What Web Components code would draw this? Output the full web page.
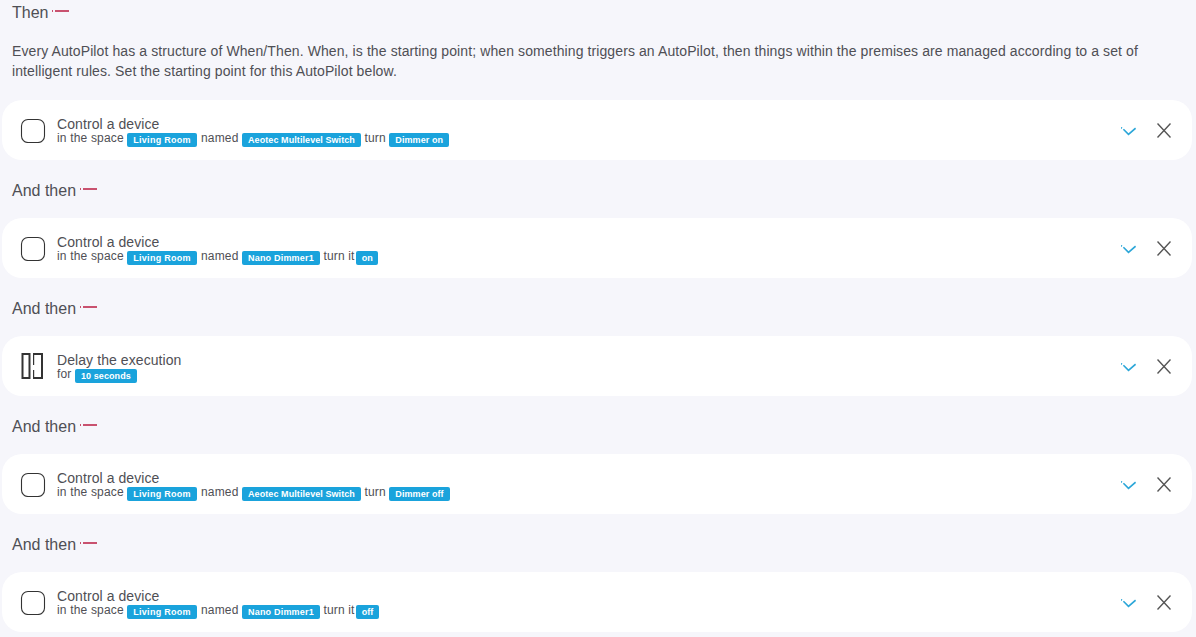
<!DOCTYPE html>
<html>
<head>
<meta charset="utf-8">
<title>AutoPilot</title>
<style>
  html, body { margin: 0; height: 637px; overflow: hidden; background: #f6f6fb; }
  body { font-family: "Liberation Sans", Arial, sans-serif; color: #4f4f55; }
  .room { --tag-spacing: 0.28px; margin-right: 0.6px; }
  .nano { --tag-spacing: 0.2px; }
  .state { margin-left: -2px; padding: 0 5.5px; }
</style>
</head>
<body>
<autopilot-page>
  <step-heading>Then</step-heading>
  <intro-text>Every AutoPilot has a structure of When/Then. When, is the starting point; when something triggers an AutoPilot, then things within the premises are managed according to a set of intelligent rules. Set the starting point for this AutoPilot below.</intro-text>

  <step-card title="Control a device">
    in the space <value-tag class="room">Living Room</value-tag> named <value-tag>Aeotec Multilevel Switch</value-tag> turn <value-tag>Dimmer on</value-tag>
  </step-card>
  <step-heading>And then</step-heading>
  <step-card title="Control a device">
    in the space <value-tag class="room">Living Room</value-tag> named <value-tag class="nano">Nano Dimmer1</value-tag> turn it <value-tag class="state">on</value-tag>
  </step-card>
  <step-heading>And then</step-heading>
  <step-card title="Delay the execution" icon="delay">
    for <value-tag>10 seconds</value-tag>
  </step-card>
  <step-heading>And then</step-heading>
  <step-card title="Control a device">
    in the space <value-tag class="room">Living Room</value-tag> named <value-tag>Aeotec Multilevel Switch</value-tag> turn <value-tag>Dimmer off</value-tag>
  </step-card>
  <step-heading>And then</step-heading>
  <step-card title="Control a device">
    in the space <value-tag class="room">Living Room</value-tag> named <value-tag class="nano">Nano Dimmer1</value-tag> turn it <value-tag class="state">off</value-tag>
  </step-card>
</autopilot-page>

<script>
class AutopilotPage extends HTMLElement {
  constructor() {
    super();
    this.attachShadow({ mode: 'open' }).innerHTML = `
      <style>
        :host { display: flex; flex-direction: column; padding: 0 4px 0 2px; }
      </style>
      <slot></slot>`;
  }
}

class StepHeading extends HTMLElement {
  constructor() {
    super();
    this.attachShadow({ mode: 'open' }).innerHTML = `
      <style>
        :host {
          display: flex; align-items: center; height: 58px; padding: 4px 0 0 10px;
          font-size: 16px; color: #4f4f55; box-sizing: border-box;
        }
        .line { display: flex; align-items: center; gap: 2px; margin: var(--dash-lift, -5px) 0 0 4px; }
        .dot { width: 1px; height: 2px; background: #c9526f; }
        .dash { width: 14px; height: 2px; background: #c9526f; }
      </style>
      <slot></slot>
      <span class="line"><span class="dot"></span><span class="dash"></span></span>`;
  }
  connectedCallback() {
    // the first heading sits at the very top of the page
    if (!this.previousElementSibling) {
      this.style.height = '24px';
      this.style.paddingTop = '2px';
      this.style.setProperty('--dash-lift', '-5px');
    }
  }
}

class IntroText extends HTMLElement {
  constructor() {
    super();
    this.attachShadow({ mode: 'open' }).innerHTML = `
      <style>
        :host {
          display: block; padding: 17px 40px 19px 10px;
          font-size: 14px; line-height: 20px; letter-spacing: 0.1px; color: #4f4f55;
        }
      </style>
      <slot></slot>`;
  }
}

class ValueTag extends HTMLElement {
  constructor() {
    super();
    this.attachShadow({ mode: 'open' }).innerHTML = `
      <style>
        :host {
          display: inline-block; height: 14px; line-height: 15px; padding: 0 6px;
          vertical-align: -1px; border-radius: 2px;
          background: #1aa3dc; color: #fff;
          font-size: 9px; font-weight: bold; letter-spacing: var(--tag-spacing, 0.08px);
        }
      </style>
      <slot></slot>`;
  }
}

const icons = {
  device: `<svg width="26" height="26" viewBox="0 0 26 26" fill="none" stroke="#333" stroke-width="1.1"><rect x="1.5" y="2.5" width="23" height="23" rx="6.5"/></svg>`,
  delay: `<svg width="26" height="26" viewBox="0 0 26 26" fill="none" stroke="#333" stroke-width="2"><rect x="2.5" y="1" width="7" height="24"/><path d="M23 1h-10M22 1v24M23 25h-10"/><path stroke-width="1.2" d="M13.6 1v11M13.6 25v-8"/></svg>`
};

class StepCard extends HTMLElement {
  constructor() {
    super();
    const kind = this.getAttribute('icon') || 'device';
    this.attachShadow({ mode: 'open' }).innerHTML = `
      <style>
        :host {
          display: flex; align-items: center; height: 60px; box-sizing: border-box;
          padding: 0 21px 0 18px; background: #fff; border-radius: 20px;
        }
        .icon { display: flex; width: 26px; height: 26px; margin-right: 11px; }
        .text { flex: 1; margin-top: 3px; }
        .title { font-size: 14px; line-height: 14px; letter-spacing: 0.08px; color: #4f4f55; }
        .detail { font-size: 12px; line-height: 14px; letter-spacing: 0.17px; color: #4f4f55; }
        .actions { display: flex; align-items: center; gap: 21px; }
        .chevron { margin-top: 2px; }
        svg { display: block; }
      </style>
      <span class="icon">${icons[kind]}</span>
      <div class="text">
        <div class="title">${this.getAttribute('title')}</div>
        <div class="detail"><slot></slot></div>
      </div>
      <div class="actions">
        <svg class="chevron" width="15" height="9" viewBox="0 0 15 9" fill="none" stroke="#2ba6d8" stroke-width="1.6"><path d="M0 .6l1 .6M2.4 2.2L7.5 7.4 14.6 1.2"/></svg>
        <svg width="14" height="15" viewBox="0 0 14 15" fill="none" stroke="#555" stroke-width="1.4"><path d="M.5 .5l13 14M13.5 .5l-13 14"/></svg>
      </div>`;
  }
}

customElements.define('autopilot-page', AutopilotPage);
customElements.define('step-heading', StepHeading);
customElements.define('intro-text', IntroText);
customElements.define('value-tag', ValueTag);
customElements.define('step-card', StepCard);
</script>
</body>
</html>
